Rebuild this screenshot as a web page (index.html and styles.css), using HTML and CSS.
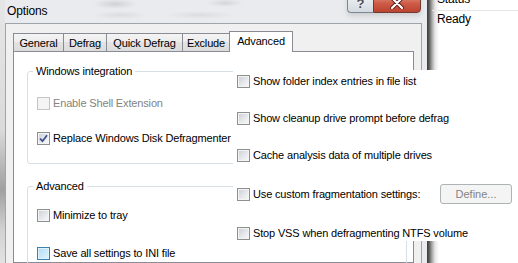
FILE: index.html
```html
<!DOCTYPE html>
<html lang="en">
<head>
    <meta charset="UTF-8">
    <meta name="viewport" content="width=device-width, initial-scale=1.0">
    <title>Options</title>
    <link rel="stylesheet" href="styles.css">
</head>
<body>
    <div class="screen">
        <div class="dialog">
            <div class="titlebar">
                <span class="title">Options</span>
                <div class="caption-btns">
                    <span class="cap help">?</span>
                    <span class="cap close">
                        <svg width="14" height="12" viewBox="0 0 14 12">
                            <path d="M2 1 L12 11 M12 1 L2 11" stroke="#5a1e16" stroke-width="4" stroke-linecap="round"/>
                            <path d="M2 1 L12 11 M12 1 L2 11" stroke="#fff" stroke-width="2.2" stroke-linecap="round"/>
                        </svg>
                    </span>
                </div>
            </div>
            <div class="client">
                <div class="tabs">
                    <span class="tab">General</span>
                    <span class="tab">Defrag</span>
                    <span class="tab">Quick Defrag</span>
                    <span class="tab">Exclude</span>
                    <span class="tab active">Advanced</span>
                </div>
                <div class="tab-panel">
                    <fieldset class="group">
                        <legend>Windows integration</legend>
                        <label class="check first disabled"><span class="box"></span>Enable Shell Extension</label>
                        <label class="check second"><span class="box"><svg width="9" height="9" viewBox="0 0 9 9"><path d="M1 4.5 L3.5 7.2 L8 1.3" fill="none" stroke="#3b4f8e" stroke-width="1.8"/></svg></span>Replace Windows Disk Defragmenter</label>
                    </fieldset>
                    <fieldset class="group adv">
                        <legend>Advanced</legend>
                        <label class="check first"><span class="box"></span>Minimize to tray</label>
                        <label class="check second hover"><span class="box"></span>Save all settings to INI file</label>
                    </fieldset>
                </div>
            </div>
        </div>
        <div class="behind">
            <div class="status-head"><span>Status</span></div>
            <div class="status-row">Ready</div>
        </div>

        <div class="overlay">
            <label class="check"><span class="box"></span>Show folder index entries in file list</label>
            <label class="check"><span class="box"></span>Show cleanup drive prompt before defrag</label>
            <label class="check"><span class="box"></span>Cache analysis data of multiple drives</label>
            <div class="check custom">
                <span class="box"></span>Use custom fragmentation settings:
                <button class="btn" disabled>Define...</button>
            </div>
            <label class="check"><span class="box"></span>Stop VSS when defragmenting NTFS volume</label>
        </div>
    </div>
</body>
</html>
```

FILE: styles.css
```css
* {
    box-sizing: border-box;
}
body {
    margin: 0;
    font-family: "Segoe UI", "Liberation Sans", Arial, sans-serif;
    font-size: 11px;
    letter-spacing: -0.15px;
    color: #000;
    background-color: #fff;
}
.screen {
    position: relative;
    display: flex;
    width: 518px;
    height: 263px;
    overflow: hidden;
}
.dialog {
    width: 427px;
    flex: none;
    display: flex;
    flex-direction: column;
    background:
        radial-gradient(ellipse 22px 5px at 115px 4px, rgba(90, 90, 90, 0.18), transparent),
        radial-gradient(ellipse 18px 4px at 225px 3px, rgba(90, 90, 90, 0.15), transparent),
        radial-gradient(ellipse 28px 4px at 120px 15px, rgba(90, 90, 90, 0.1), transparent),
        radial-gradient(ellipse 35px 4px at 200px 15px, rgba(90, 90, 90, 0.1), transparent),
        linear-gradient(to bottom, #e6e6e6 0, #dadada 130px, #a0a0a0 190px, #d2d2d2 230px, #e2e2e2 100%) 0 0 / 5px 100% no-repeat,
        #e9ebee;
}
.titlebar {
    flex: none;
    height: 23px;
    display: flex;
    align-items: flex-start;
}
.title {
    margin: 3px 0 0 7px;
    font-size: 12px;
    line-height: 16px;
}
.caption-btns {
    display: flex;
    margin: -7px 6px 0 auto;
    box-shadow: 0 3px 5px rgba(0, 0, 0, 0.12);
    border-radius: 0 0 4px 4px;
}
.cap {
    height: 20px;
    display: flex;
    align-items: center;
    justify-content: center;
}
.cap.help {
    width: 26px;
    border: 1px solid #7d8794;
    border-right: none;
    border-radius: 0 0 0 4px;
    background: linear-gradient(#f1f4f7, #d3d9e0);
    color: #4a4f55;
    font-size: 13px;
    font-weight: bold;
    text-shadow: 0 0 2px #fff;
}
.cap.close {
    width: 48px;
    border: 1px solid #6f3a33;
    border-radius: 0 0 4px 0;
    background: linear-gradient(#e6a291, #cf5d48 50%, #bb4330);
}
.client {
    flex: 1;
    min-height: 0;
    overflow: hidden;
    margin: 0 5px;
    display: flex;
    flex-direction: column;
    border: 1px solid #9ea5ad;
    border-bottom: none;
    background-color: #f0f0f0;
    padding: 7px 7px 0 7px;
}
.tabs {
    flex: none;
    display: flex;
    align-items: flex-end;
    height: 20px;
}
.tab {
    height: 18px;
    padding-top: 2px;
    margin-right: -1px;
    line-height: 14px;
    text-align: center;
    border: 1px solid #898c95;
    border-bottom: none;
    background: linear-gradient(#f4f4f4, #ececec 50%, #e3e3e3 50%, #dcdcdc);
}
.tab:nth-child(1) { width: 51px; }
.tab:nth-child(2) { width: 44px; }
.tab:nth-child(3) { width: 77px; }
.tab:nth-child(4) { width: 48px; }
.tab.active {
    width: 64px;
    height: 21px;
    margin-bottom: -1px;
    padding-top: 2px;
    background: #fff;
    position: relative;
    z-index: 1;
}
.tab-panel {
    flex: 1;
    min-height: 0;
    border: 1px solid #898c95;
    background-color: #fff;
    padding-left: 13px;
}
.group {
    margin: 11px 0 0 0;
    width: 380px;
    border: 1px solid #d5dfe5;
    border-radius: 3px;
    padding: 0 0 17px 9px;
}
.group.adv {
    margin-top: 14px;
}
.group legend {
    margin-left: -4px;
    padding: 0 3px;
    line-height: 16px;
}
.check {
    display: flex;
    align-items: center;
    gap: 3px;
    height: 16px;
    white-space: nowrap;
}
.group .first {
    margin-top: 16px;
}
.group .second {
    margin-top: 19px;
}
.group.adv .first {
    margin-top: 13px;
}
.group.adv .second {
    margin-top: 22px;
}
.box {
    width: 13px;
    height: 13px;
    flex: none;
    display: flex;
    align-items: center;
    justify-content: center;
    border: 1px solid #8e8f8f;
    background: linear-gradient(135deg, #c9cdd2 0%, #e9ebee 60%, #f8f8f8 100%);
    box-shadow: inset 0 0 0 1px #f4f4f4;
}
.check.disabled {
    color: #838383;
}
.check.disabled .box {
    border-color: #c5c5c5;
    background: #f4f4f4;
}
.check.hover .box {
    border-color: #3c7fb1;
    background: linear-gradient(135deg, #b0ddf5 0%, #cdeafa 60%, #e6f5fd 100%);
    box-shadow: inset 0 0 0 1px #def3fc;
}
.behind {
    flex: 1;
    background: linear-gradient(to right, #3a3a3a 0, #585858 2px, #a8a8a8 5px, #e6e6e6 8px, #fff 12px);
}
.status-head {
    height: 11px;
    margin-left: 5px;
    padding-left: 5px;
    border-bottom: 1px solid #e5e5e5;
    overflow: hidden;
}
.status-head span {
    display: block;
    margin-top: -9px;
    font-size: 12px;
    line-height: 16px;
}
.status-row {
    padding: 0 0 0 10px;
    font-size: 12px;
    line-height: 16px;
}
.overlay {
    position: absolute;
    left: 233px;
    top: 70px;
    width: 285px;
    height: 171px;
    background-color: #fff;
    padding: 3px 6px 0 4px;
    display: flex;
    flex-direction: column;
    gap: 21px;
}
.check.custom {
    height: 20px;
}
.btn {
    margin-left: auto;
    width: 72px;
    height: 20px;
    padding: 0;
    font: inherit;
    color: #838383;
    border: 1px solid #adb2b5;
    border-radius: 3px;
    background-color: #f4f4f4;
}
```
